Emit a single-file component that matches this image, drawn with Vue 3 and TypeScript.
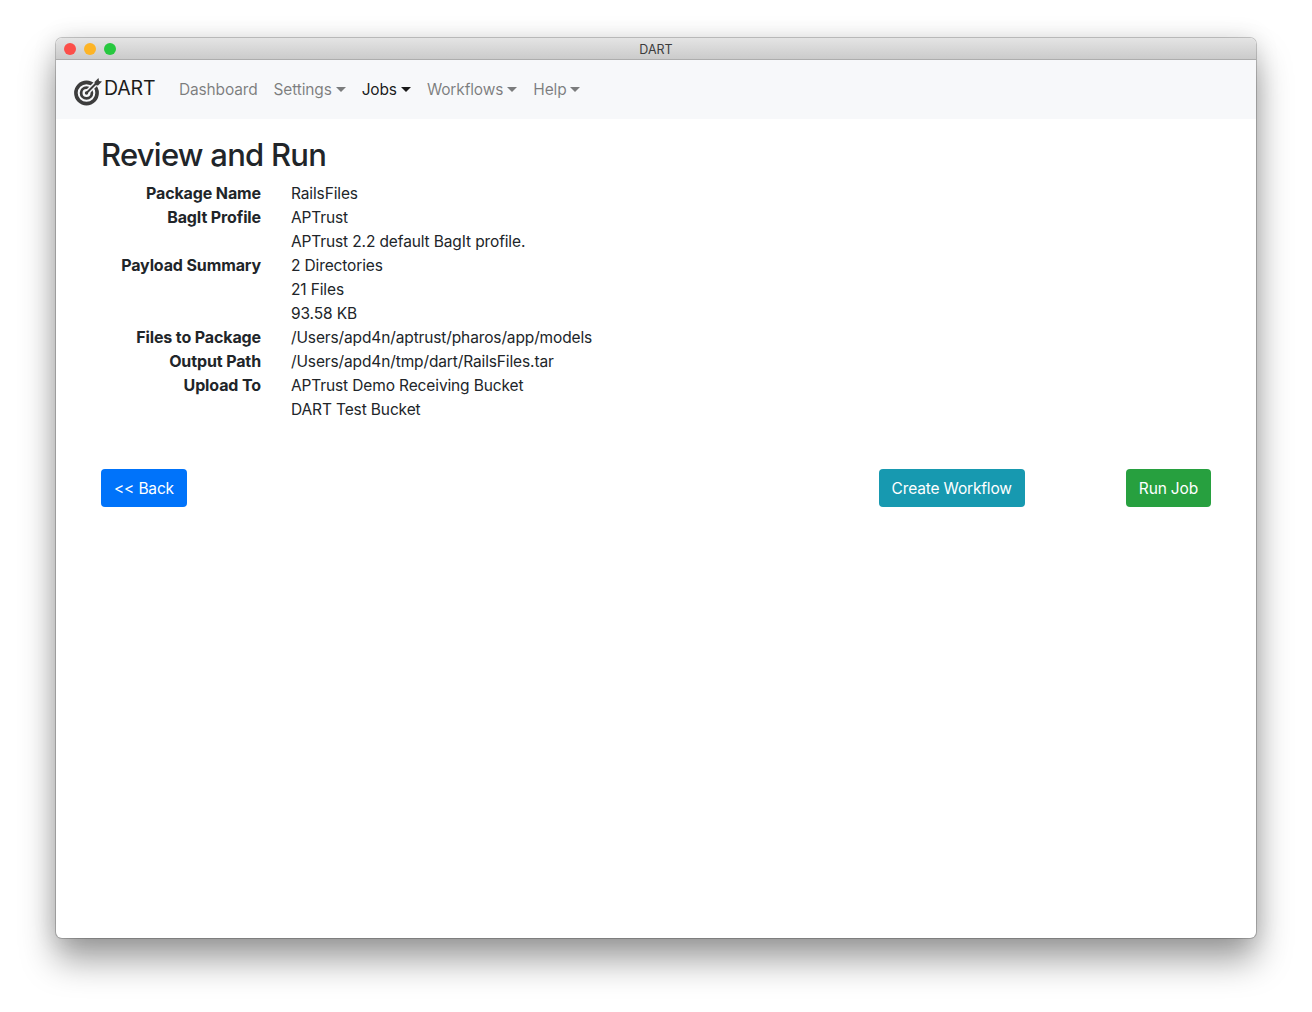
<script setup lang="ts">
const navItems = [
  { label: 'Dashboard', caret: false, active: false },
  { label: 'Settings', caret: true, active: false },
  { label: 'Jobs', caret: true, active: true },
  { label: 'Workflows', caret: true, active: false },
  { label: 'Help', caret: true, active: false },
]
const rows = [
  { label: 'Package Name', value: 'RailsFiles' },
  { label: 'BagIt Profile', value: 'APTrust' },
  { label: '', value: 'APTrust 2.2 default BagIt profile.' },
  { label: 'Payload Summary', value: '2 Directories' },
  { label: '', value: '21 Files' },
  { label: '', value: '93.58 KB' },
  { label: 'Files to Package', value: '/Users/apd4n/aptrust/pharos/app/models' },
  { label: 'Output Path', value: '/Users/apd4n/tmp/dart/RailsFiles.tar' },
  { label: 'Upload To', value: 'APTrust Demo Receiving Bucket' },
  { label: '', value: 'DART Test Bucket' },
]
</script>

<template>
  <div class="stage">
    <div class="window">
      <div class="titlebar">
        <div class="lights">
          <span class="light red"></span>
          <span class="light yellow"></span>
          <span class="light green"></span>
        </div>
        <span class="title">DART</span>
      </div>
      <nav class="navbar">
        <a class="brand">
          <svg class="logo" width="30" height="30" viewBox="0 0 30 30" fill="none">
            <circle cx="13.5" cy="17" r="10.6" stroke="#3d3d3d" stroke-width="3.6"/>
            <circle cx="13.5" cy="17" r="5.4" stroke="#3d3d3d" stroke-width="2.8"/>
            <path d="M13.5 17 24 6.5" stroke="#f7f8fa" stroke-width="5"/>
            <path d="M13.5 17 24.5 6" stroke="#3d3d3d" stroke-width="2"/>
            <circle cx="13.5" cy="17" r="1.7" fill="#3d3d3d"/>
            <path d="M21.5 6 25.5 2 26 5 29 5.5 25 9.5 22 9Z" fill="#3d3d3d"/>
          </svg>
          <span class="brand-text">DART</span>
        </a>
        <ul class="nav">
          <li v-for="item in navItems" :key="item.label" class="nav-link" :class="{ active: item.active }">
            {{ item.label }}<span v-if="item.caret" class="caret"></span>
          </li>
        </ul>
      </nav>
      <main class="content">
        <h2 class="heading">Review and Run</h2>
        <div class="summary">
          <template v-for="(row, i) in rows" :key="i">
            <div class="label">{{ row.label }}</div>
            <div class="value">{{ row.value }}</div>
          </template>
        </div>
        <div class="actions">
          <button class="btn blue">&lt;&lt; Back</button>
          <button class="btn teal">Create Workflow</button>
          <button class="btn green-btn">Run Job</button>
        </div>
      </main>
    </div>
  </div>
</template>

<style>
html, body { margin: 0; background: #fff; }
</style>

<style scoped>
.stage {
  width: 1312px;
  height: 1012px;
  padding: 38px 56px 74px;
  box-sizing: border-box;
  overflow: hidden;
  background: #fff;
  font-family: Inter, "Liberation Sans", sans-serif;
  color: #212529;
}
.window {
  height: 900px;
  display: flex;
  flex-direction: column;
  border-radius: 6px;
  overflow: hidden;
  background: #fff;
  box-shadow: 0 0 0 1px rgba(0,0,0,.2), 0 22px 35px rgba(0,0,0,.38), 0 0 24px rgba(0,0,0,.12);
}
.titlebar {
  height: 22px;
  flex: none;
  position: relative;
  display: flex;
  align-items: center;
  justify-content: center;
  box-sizing: border-box;
  background: linear-gradient(#e4e4e4, #cbcbcb);
  border-bottom: 1px solid #adadad;
}
.lights { position: absolute; left: 8px; top: 5px; display: flex; gap: 8px; }
.light { width: 12px; height: 12px; border-radius: 50%; }
.red { background: #fc4f4a; }
.yellow { background: #fdb426; }
.green { background: #27c83f; }
.title { font-size: 12.5px; color: #3c3c3c; margin-top: 1px; }
.navbar {
  height: 59px;
  flex: none;
  display: flex;
  align-items: center;
  padding: 0 16px;
  background: #f7f8fa;
  box-sizing: border-box;
}
.brand { display: flex; align-items: center; margin-right: 15.5px; }
.logo { margin-top: 3px; margin-right: 1px; margin-left: 1px; }
.brand-text { font-size: 19.5px; letter-spacing: -.15px; color: #1c1c1c; margin-bottom: 3px; }
.nav { display: flex; list-style: none; margin: 0; padding: 0; }
.nav-link {
  padding: 0 8px;
  font-size: 15.5px;
  letter-spacing: -.15px;
  line-height: 24px;
  color: rgba(0,0,0,.5);
  display: flex;
  align-items: center;
}
.nav-link.active { color: rgba(0,0,0,.9); }
.caret {
  display: inline-block;
  margin-left: 4px;
  border-top: 5px solid currentColor;
  border-left: 5px solid transparent;
  border-right: 5px solid transparent;
}
.content { padding: 17px 45px 0; }
.heading {
  margin: 0 0 7px;
  font-size: 31px;
  letter-spacing: -.75px;
  line-height: 38.4px;
  font-weight: 500;
}
.summary {
  display: grid;
  grid-template-columns: 160px 1fr;
  column-gap: 30px;
  line-height: 24px;
}
.label { font-size: 16px; letter-spacing: -.12px; font-weight: 700; text-align: right; }
.value { font-size: 15.5px; letter-spacing: -.13px; line-height: 26px; height: 24px; }
.actions {
  margin-top: 48px;
  display: flex;
  align-items: center;
}
.btn {
  height: 38px;
  padding: 0 13px;
  border: 0;
  border-radius: 4px;
  color: #fff;
  font: inherit;
  font-size: 15.5px;
  letter-spacing: -.16px;
}
.blue { background: #0073fa; }
.teal { background: #1799b0; margin-left: auto; margin-right: 101px; }
.green-btn { background: #27a03f; }
</style>
